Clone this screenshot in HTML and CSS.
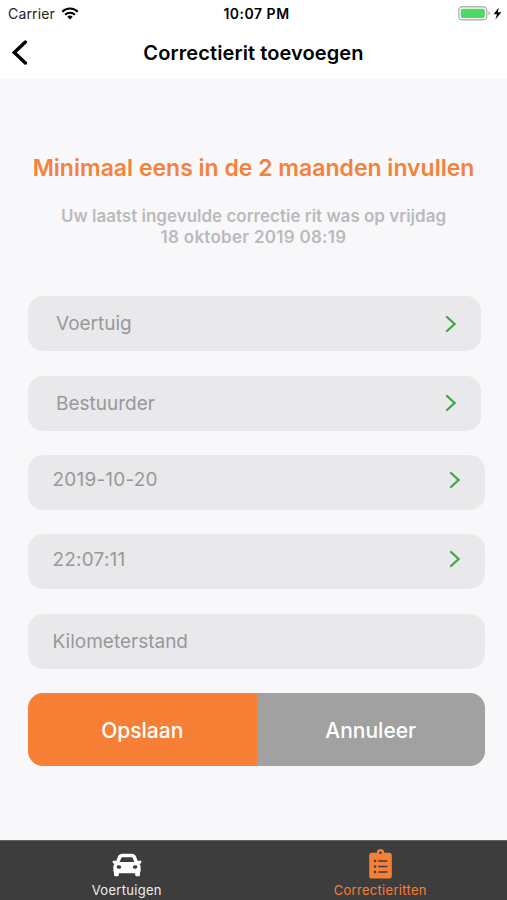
FILE: index.html
```html
<!DOCTYPE html>
<html lang="nl">
  <head>
    <meta charset="UTF-8" />
    <meta name="viewport" content="width=device-width, initial-scale=1.0" />
    <title>Correctierit toevoegen</title>
    <link rel="stylesheet" href="styles.css">
  </head>
  <body>
    <header>
      <div class="status-bar">
        <div class="status-left">
          <span class="carrier">Carrier</span>
          <svg class="wifi" width="18" height="13" viewBox="0 0 18 13">
            <g fill="none" stroke="#000" stroke-width="2.1">
              <path d="M1.2 4.7a11 11 0 0 1 15.6 0" />
              <path d="M4.1 7.8a7 7 0 0 1 9.8 0" />
            </g>
            <path d="M6.3 9.8a3.8 3.8 0 0 1 5.4 0L9 12.6z" />
          </svg>
        </div>
        <span class="time">10:07 PM</span>
        <div class="status-right">
          <svg width="44" height="15" viewBox="0 0 44 15">
            <rect x="0.8" y="0.8" width="28" height="13" rx="3.6" fill="#fff" stroke="#b5b5b5" stroke-width="1.4" />
            <rect x="2.7" y="2.7" width="24.2" height="9.2" rx="1.8" fill="#4cd964" />
            <path d="M30.4 5.3q1.5 .6 1.5 2t-1.5 2z" fill="#b5b5b5" />
            <path d="M40.8 1.6L35.6 8.3h3.4L37.4 13.4l6-7.2h-3.6z" />
          </svg>
        </div>
      </div>
      <div class="nav-bar">
        <a href="#" class="back-button">
          <svg width="18" height="28" viewBox="0 0 18 28">
            <path d="M15.4 3.1L4.3 13.6l11.1 10.4" fill="none" stroke="#000" stroke-width="3.4" stroke-linecap="round" stroke-linejoin="miter" />
          </svg>
        </a>
        <h1>Correctierit toevoegen</h1>
      </div>
    </header>

    <main>
      <div class="intro">
        <h2>Minimaal eens in de 2 maanden invullen</h2>
        <p class="last-entry">
          Uw laatst ingevulde correctie rit was op vrijdag<br />
          <span class="last-date">18 oktober 2019 08:19</span>
        </p>
      </div>

      <div class="fields">
        <div class="field select">
          <span>Voertuig</span>
          <svg class="chevron" width="12" height="18" viewBox="0 0 12 18"><path d="M2 2l7.6 7L2 16" /></svg>
        </div>
        <div class="field select">
          <span>Bestuurder</span>
          <svg class="chevron" width="12" height="18" viewBox="0 0 12 18"><path d="M2 2l7.6 7L2 16" /></svg>
        </div>
        <div class="field picker">
          <span>2019-10-20</span>
          <svg class="chevron" width="12" height="18" viewBox="0 0 12 18"><path d="M2 2l7.6 7L2 16" /></svg>
        </div>
        <div class="field picker">
          <span>22:07:11</span>
          <svg class="chevron" width="12" height="18" viewBox="0 0 12 18"><path d="M2 2l7.6 7L2 16" /></svg>
        </div>
        <div class="field">
          <span>Kilometerstand</span>
        </div>
      </div>

      <div class="buttons">
        <button class="save">Opslaan</button>
        <button class="cancel">Annuleer</button>
      </div>
    </main>

    <nav class="tab-bar">
      <a href="#" class="tab">
        <svg width="30" height="24" viewBox="0 0 30 24">
          <path fill="#fff" fill-rule="evenodd" d="M10.500.7h9c2.300 0 3.700.9 4.400 2.600l1.700 4.400h2.700c.9 0 1.300.5 1.100 1.200l-.4 1.200c-.1.400-.5.700-1 .7h-.7c.8.800 1.300 1.800 1.300 3v3.900c0 .7-.2 1.300-.6 1.800v2.300c0 .9-.5 1.500-1.400 1.500h-2c-.9 0-1.400-.6-1.400-1.500v-1.500H6.800v1.500c0 .9-.5 1.500-1.400 1.500h-2c-.9 0-1.400-.6-1.400-1.500v-2.300c-.4-.5-.6-1.100-.6-1.800v-3.900c0-1.200.5-2.200 1.300-3H2c-.5 0-.9-.3-1-.7L.6 8.900C.4 8.200.8 7.700 1.700 7.700h2.700l1.700-4.400C6.800 1.600 8.200.7 10.500.7zM10.500 4.300c-.8 0-1.200.3-1.400.9L7.700 9.100h14.600l-1.400-3.900c-.2-.6-.6-.9-1.400-.9z" />
          <g fill="#3d3d3d">
            <ellipse cx="6.900" cy="14" rx="2.300" ry="1.800" transform="rotate(12 6.900 14)" />
            <ellipse cx="23.100" cy="14" rx="2.300" ry="1.800" transform="rotate(-12 23.100 14)" />
          </g>
        </svg>
        <span>Voertuigen</span>
      </a>
      <a href="#" class="tab active">
        <svg width="23" height="30" viewBox="0 0 23 30">
          <path fill="#f77f36" fill-rule="evenodd" d="M2.600 3.700h5.200a3.700 3.700 0 0 1 7.400 0h5.200c1.400 0 2.400 1 2.400 2.400v21.100c0 1.400-1 2.400-2.400 2.400H2.600c-1.400 0-2.400-1-2.400-2.400V6.100c0-1.400 1-2.400 2.400-2.400zM11.500 2.500a1.300 1.300 0 1 0 0 2.600 1.300 1.300 0 0 0 0-2.600z" />
          <g fill="#3d3d3d">
            <circle cx="6" cy="12" r="1.300" />
            <circle cx="6" cy="17.500" r="1.300" />
            <circle cx="6" cy="23" r="1.300" />
            <rect x="9.200" y="11.200" width="9.200" height="1.600" rx=".4" />
            <rect x="9.200" y="16.700" width="9.200" height="1.600" rx=".4" />
            <rect x="9.200" y="22.200" width="9.200" height="1.600" rx=".4" />
          </g>
        </svg>
        <span>Correctieritten</span>
      </a>
    </nav>
  </body>
</html>
```
FILE: styles.css
```css
* {
  margin: 0;
  padding: 0;
  box-sizing: border-box;
}

body {
  height: 900px;
  font-family: Inter, "Liberation Sans", sans-serif;
  background-color: #f8f8fb;
  color: #000;
  display: flex;
  flex-direction: column;
  overflow: hidden;
}

header {
  height: 79px;
  background-color: #fff;
}

.status-bar {
  height: 27px;
  padding: 0 5px 0 8px;
  display: grid;
  grid-template-columns: 1fr auto 1fr;
  align-items: center;
  font-size: 14px;
}

.status-left {
  display: flex;
  align-items: center;
  gap: 6px;
}

.carrier {
  color: #222;
  letter-spacing: 0.15px;
}

.time {
  padding-left: 3px;
  font-weight: 600;
  font-size: 14px;
  letter-spacing: 0.5px;
}

.status-right {
  display: flex;
  justify-content: flex-end;
}

.nav-bar {
  height: 51px;
  padding: 0 10px;
  display: grid;
  grid-template-columns: 18px 1fr 18px;
  align-items: center;
}

.back-button {
  display: flex;
}

h1 {
  font-size: 20px;
  font-weight: 600;
  letter-spacing: 0.1px;
  text-align: center;
}

main {
  flex: 1;
  padding: 73px 22px 0 28px;
}

/* text is centered on the screen, the form is slightly wider on the right */
.intro {
  margin-right: -22px;
  margin-left: -28px;
  text-align: center;
}

h2 {
  color: #f5813b;
  font-size: 23px;
  line-height: 32px;
  font-weight: 600;
}

.last-entry {
  margin-top: 22px;
  color: #bababc;
  font-size: 17px;
  line-height: 21px;
  font-weight: 600;
}

.last-date {
  letter-spacing: 0.28px;
}

.fields {
  margin-top: 48.2px;
  display: flex;
  flex-direction: column;
  gap: 24.4px;
}

.field {
  height: 55px;
  padding: 0 24px 0 24.5px;
  display: flex;
  justify-content: space-between;
  align-items: center;
  background-color: #e9e9eb;
  border-radius: 15px;
  color: #98989a;
  font-size: 19px;
}

.field.select {
  margin-right: 4px;
  padding-left: 28px;
}

.field.picker {
  padding-bottom: 5px;
  letter-spacing: 0.2px;
}

.chevron {
  fill: none;
  stroke: #43a547;
  stroke-width: 2.3;
  stroke-linecap: round;
}

.buttons {
  height: 73px;
  margin-top: 24.2px;
  display: flex;
  border-radius: 15px;
  overflow: hidden;
}

.buttons button {
  flex: 1;
  padding-top: 2px;
  border: none;
  color: #fff;
  font-family: inherit;
  font-size: 21px;
  font-weight: 500;
}

.save {
  background-color: #f77f36;
}

.cancel {
  background-color: #a1a1a1;
}

.tab-bar {
  height: 60px;
  background-color: #3d3d3d;
  border-top: 1px solid #666;
  display: flex;
}

.tab {
  flex: 1;
  padding-bottom: 2px;
  display: flex;
  flex-direction: column;
  align-items: center;
  justify-content: flex-end;
  gap: 5px;
  color: #eee;
  font-size: 13px;
  line-height: 16px;
  letter-spacing: 0.3px;
  text-decoration: none;
}

.tab.active {
  color: #f77f36;
  gap: 3px;
}
```
